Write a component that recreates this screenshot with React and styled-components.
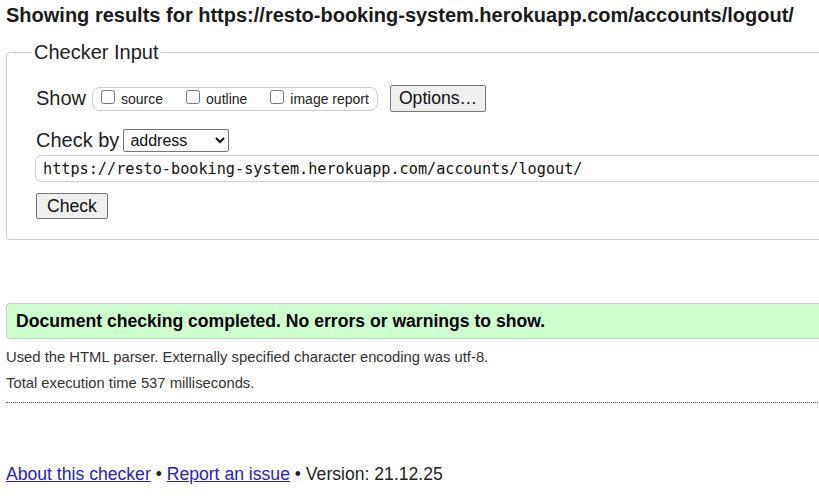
import styled, { createGlobalStyle } from 'styled-components';

const GlobalStyle = createGlobalStyle`
  html, body {
    margin: 0;
    padding: 0;
    overflow: hidden;
    background: #fff;
  }
  body {
    font-family: 'Liberation Sans', Arial, sans-serif;
    color: #222;
  }
`;

const Page = styled.div`
  width: 880px;
  padding: 0 0 0 6px;
`;

const Title = styled.h2`
  margin: 3px 0 0;
  font-size: 20px;
  line-height: 24px;
  font-weight: bold;
  color: #1a1a1a;
`;

const Fieldset = styled.fieldset`
  margin: 14px 0 0;
  padding: 4px 0 20px 29px;
  border: 1px solid #ccc;
  border-radius: 4px;
  width: 860px;
  box-sizing: border-box;

  legend {
    margin-left: -4px;
    padding: 0 2px;
    font-size: 20px;
    line-height: 22px;
    color: #222;
  }
`;

const Row = styled.div`
  display: flex;
  align-items: center;
  margin-top: ${p => p.top || 0}px;
`;

const Label = styled.span`
  font-size: 20px;
  color: #222;
`;

const Options = styled.div`
  display: flex;
  align-items: center;
  height: 22px;
  margin-left: 6px;
  padding: 0 8px 0 8px;
  border: 1px solid #ccc;
  border-radius: 8px;
  font-size: 14px;
  color: #222;

  label {
    display: flex;
    align-items: center;
    margin-right: 23px;
  }
  label:last-child {
    margin-right: 0;
  }
  input {
    width: 14px;
    height: 14px;
    margin: 0 6px 4px 0;
  }
`;

const Button = styled.button`
  font-family: 'Liberation Sans', Arial, sans-serif;
  font-size: 17.6px;
  color: #111;
  background: #efefef;
  border: 1px solid #767676;
  border-radius: 2px;
  padding: 0 ${p => p.pad || 8}px;
  height: ${p => p.h || 27}px;
  margin-left: ${p => p.left || 0}px;
`;

const Select = styled.select`
  font-family: 'Liberation Sans', Arial, sans-serif;
  font-size: 16px;
  color: #111;
  width: 106px;
  height: 23px;
  margin-left: 4px;
  border: 1px solid #767676;
  border-radius: 2px;
  background: #fff;
  padding: 0 0 0 2px;
`;

const UrlInput = styled.input`
  display: block;
  width: 900px;
  height: 27px;
  box-sizing: border-box;
  margin: 3px 0 0 -1px;
  padding: 0 7px;
  border: 1px solid #ccc;
  border-radius: 6px;
  font-family: 'DejaVu Sans Mono', 'Liberation Mono', monospace;
  font-size: 15.2px;
  color: #111;
`;

const Result = styled.div`
  margin-top: 63px;
  height: 36px;
  box-sizing: border-box;
  border: 1px solid #ccc;
  border-radius: 4px;
  background: #ccffcc;
  padding-left: 9px;
  display: flex;
  align-items: center;
  font-size: 17.6px;
  font-weight: bold;
  color: #000;
`;

const Note = styled.p`
  margin: ${p => p.top}px 0 0;
  font-size: 14.8px;
  line-height: 18px;
  color: #333;
`;

const Rule = styled.hr`
  margin: 10px 0 0;
  border: 0;
  border-top: 1px dotted #666;
  width: 820px;
`;

const Footer = styled.p`
  margin: 60px 0 0;
  font-size: 17.6px;
  line-height: 22px;
  color: #222;

  a {
    color: #2222cc;
  }
`;

export default function App() {
  return (
    <>
      <GlobalStyle />
      <Page>
        <Title>Showing results for https://resto-booking-system.herokuapp.com/accounts/logout/</Title>
        <Fieldset>
          <legend>Checker Input</legend>
          <Row top={18}>
            <Label>Show</Label>
            <Options>
              <label><input type="checkbox" />source</label>
              <label><input type="checkbox" />outline</label>
              <label><input type="checkbox" />image report</label>
            </Options>
            <Button left={12} pad={8}>Options…</Button>
          </Row>
          <Row top={17}>
            <Label>Check by</Label>
            <Select defaultValue="address">
              <option value="address">address</option>
              <option value="upload">file upload</option>
              <option value="input">text input</option>
            </Select>
          </Row>
          <UrlInput defaultValue="https://resto-booking-system.herokuapp.com/accounts/logout/" />
          <Row top={11}>
            <Button pad={10} h={26}>Check</Button>
          </Row>
        </Fieldset>
        <Result>Document checking completed. No errors or warnings to show.</Result>
        <Note top={9}>Used the HTML parser. Externally specified character encoding was utf-8.</Note>
        <Note top={8}>Total execution time 537 milliseconds.</Note>
        <Rule />
        <Footer>
          <a href="#about">About this checker</a> • <a href="#issue">Report an issue</a> • Version: 21.12.25
        </Footer>
      </Page>
    </>
  );
}
